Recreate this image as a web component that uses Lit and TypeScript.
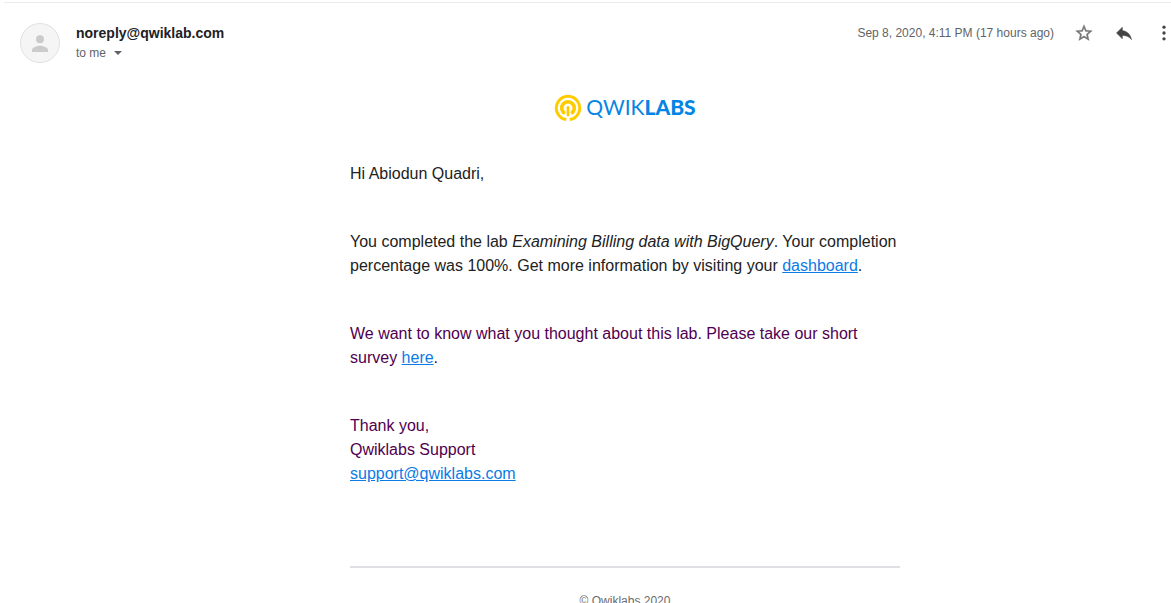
import { LitElement, html, css } from "lit";
import { customElement } from "lit/decorators.js";

@customElement("message-header")
class MessageHeader extends LitElement {
  static styles = css`
    :host {
      display: block;
    }
    .bar {
      display: flex;
      align-items: flex-start;
      margin-left: 4px;
      padding: 20px 0 0 16px;
      border-top: 1px solid #ebebeb;
    }
    .avatar {
      flex: none;
      width: 40px;
      height: 40px;
      margin-right: 16px;
    }
    .sender {
      flex: 1;
      display: flex;
      flex-direction: column;
      align-items: flex-start;
      min-width: 0;
    }
    .name {
      margin: 0;
      font-size: 14px;
      line-height: 20px;
      font-weight: 700;
      color: #202124;
    }
    button {
      font: inherit;
      color: inherit;
      border: 0;
      padding: 0;
      background: none;
      cursor: pointer;
      display: flex;
      align-items: center;
    }
    .to {
      font-size: 12px;
      line-height: 20px;
      color: #5f6368;
      gap: 8px;
    }
    .side {
      display: flex;
      align-items: center;
      height: 20px;
      gap: 20px;
      margin-right: -3px;
    }
    time {
      font-size: 12px;
      color: #5f6368;
      white-space: nowrap;
    }
    svg {
      display: block;
    }
  `;

  render() {
    return html`
      <header class="bar">
        <svg class="avatar" viewBox="0 0 40 40" aria-hidden="true">
          <circle cx="20" cy="20" r="19.5" fill="#f5f5f5" stroke="#e0e0e0" />
          <circle cx="20" cy="16.2" r="4" fill="#cbcbcb" />
          <path d="M12 29v-2c0-2.700 5.300-4.300 8-4.300s8 1.600 8 4.300v2z" fill="#cbcbcb" />
        </svg>
        <div class="sender">
          <h3 class="name">noreply@qwiklab.com</h3>
          <button class="to" aria-label="Show details">
            to me
            <svg width="8" height="4" viewBox="0 0 8 4"><path d="M0 0h8L4 4z" fill="#5f6368" /></svg>
          </button>
        </div>
        <div class="side">
          <time datetime="2020-09-08T16:11">Sep 8, 2020, 4:11 PM (17 hours ago)</time>
          <button aria-label="Star">
            <svg width="20" height="20" viewBox="0 0 24 24" fill="#747474" stroke="#747474" stroke-width=".4">
              <path d="M22 9.240l-7.190-.62L12 2 9.190 8.630 2 9.240l5.460 4.730L5.820 21 12 17.270 18.180 21l-1.630-7.030L22 9.240zM12 15.400l-3.760 2.270 1-4.280-3.320-2.880 4.380-.38L12 6.100l1.710 4.040 4.380.38-3.320 2.880 1 4.280L12 15.400z" />
            </svg>
          </button>
          <button aria-label="Reply">
            <svg width="20" height="20" viewBox="0 0 24 24" fill="#444" stroke="#444" stroke-width=".6">
              <path d="M10 9V5l-7 7 7 7v-4.100c5 0 8.500 1.600 11 5.100-1-5-4-10-11-11z" />
            </svg>
          </button>
          <button aria-label="More">
            <svg width="20" height="20" viewBox="0 0 24 24" fill="#444">
              <circle cx="12" cy="5" r="2" />
              <circle cx="12" cy="12" r="2" />
              <circle cx="12" cy="19" r="2" />
            </svg>
          </button>
        </div>
      </header>
    `;
  }
}

@customElement("qwiklabs-logo")
class QwiklabsLogo extends LitElement {
  static styles = css`
    :host {
      display: flex;
      align-items: flex-end;
      justify-content: center;
      gap: 4px;
      padding-top: 1px;
      font-family: Lato, sans-serif;
      font-size: 21px;
      color: #0485e4;
    }
    .word {
      line-height: 30px;
    }
    .thin {
      font-weight: 400;
    }
    .heavy {
      font-weight: 900;
    }
  `;

  render() {
    return html`
      <svg width="28" height="28" viewBox="0 0 28 28" fill="none" stroke="#fc0" aria-hidden="true">
        <path d="M12.300 25.600A11.700 11.700 0 1 1 15.700 25.600" stroke-width="3" />
        <path d="M10.900 19.500A6.300 6.300 0 1 1 17.100 19.500" stroke-width="3.600" />
        <path d="M14 13.500v7.500" stroke-width="2.800" stroke-linecap="round" />
      </svg>
      <span class="word"><span class="thin">QWIK</span><span class="heavy">LABS</span></span>
    `;
  }
}

@customElement("app-root")
class AppRoot extends LitElement {
  static styles = css`
    :host {
      display: block;
      box-sizing: border-box;
      height: 100vh;
      overflow: hidden;
      padding-top: 2px;
      background: #fff;
      font-family: "Liberation Sans", Arial, sans-serif;
    }
    .body {
      padding: 28px 0 0 79px;
    }
    .letter {
      max-width: 550px;
      margin: 0 auto;
      font-size: 16px;
      line-height: 24px;
      color: #222;
    }
    p {
      margin: 0 0 44px;
    }
    .greeting {
      margin-top: 40px;
    }
    .quoted {
      color: #500050;
    }
    a {
      color: #0b7be5;
    }
    footer {
      margin-top: 80px;
      padding-top: 24px;
      border-top: 2px solid #e0e0e4;
      text-align: center;
      font-size: 12px;
      line-height: 18px;
      color: #6b6b6b;
    }
  `;

  render() {
    return html`
      <message-header></message-header>
      <main class="body">
        <article class="letter">
          <qwiklabs-logo></qwiklabs-logo>
          <p class="greeting">Hi Abiodun Quadri,</p>
          <p>
            You completed the lab <em>Examining Billing data with BigQuery</em>. Your completion percentage was 100%.
            Get more information by visiting your <a href="#dashboard">dashboard</a>.
          </p>
          <p class="quoted">
            We want to know what you thought about this lab. Please take our short survey <a href="#survey">here</a>.
          </p>
          <p class="quoted">
            Thank you,<br />Qwiklabs Support<br /><a href="mailto:support@qwiklabs.com">support@qwiklabs.com</a>
          </p>
          <footer>© Qwiklabs 2020</footer>
        </article>
      </main>
    `;
  }
}
